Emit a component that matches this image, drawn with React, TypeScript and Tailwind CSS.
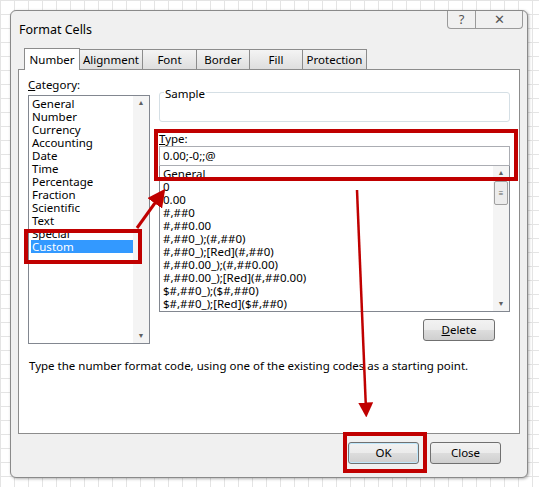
const categories = ["General", "Number", "Currency", "Accounting", "Date", "Time", "Percentage", "Fraction", "Scientific", "Text", "Special", "Custom"];
const formats = ["General", "0", "0.00", "#,##0", "#,##0.00", "#,##0_);(#,##0)", "#,##0_);[Red](#,##0)", "#,##0.00_);(#,##0.00)", "#,##0.00_);[Red](#,##0.00)", "$#,##0_);($#,##0)", "$#,##0_);[Red]($#,##0)"];
const tabs = ["Alignment", "Font", "Border", "Fill", "Protection"];
const tabW = [63, 54, 53, 53, 64];

const font = "font-['Liberation_Sans',Arial,sans-serif] text-[11.5px] text-black";
const btn = "flex items-center justify-center rounded-[3px] border border-[#707070] bg-[linear-gradient(#f2f2f2,#ebebeb_50%,#dddddd_50%,#cfcfcf)]";

function ScrollBar({ thumb }: { thumb?: boolean }) {
  return (
    <div className="flex w-[16px] flex-col items-center justify-between bg-[#f4f4f4] py-[2px] text-[7px] text-[#606060]">
      <span>▲</span>
      {thumb && <div className="mb-auto mt-[2px] flex h-[24px] w-[14px] items-center justify-center rounded-[2px] border border-[#a0a0a0] bg-[#ececec] text-[8px] leading-[4px]">≡</div>}
      <span>▼</span>
    </div>
  );
}

export default function App() {
  return (
    <div className={`relative h-[487px] w-[539px] overflow-hidden bg-white bg-[linear-gradient(#e4e4e4_1px,transparent_1px),linear-gradient(90deg,#e4e4e4_1px,transparent_1px)] bg-[size:14px_14px] ${font}`}>
      <div className="absolute left-[10px] top-[10px] flex h-[468px] w-[518px] flex-col rounded-[6px] border border-[#8a8a8a] bg-[#f0f0f0] shadow-[1px_1px_3px_rgba(0,0,0,0.3)]">
        <div className="flex h-[38px] items-start justify-between pl-[8px]">
          <span className="mt-[10px] text-[12.5px]">Format Cells</span>
          <div className="mr-[4px] flex h-[18px] rounded-b-[4px] border border-t-0 border-[#9a9a9a] text-[13px] text-[#555]">
            <div className="flex w-[28px] items-center justify-center border-r border-[#9a9a9a]">?</div>
            <div className="flex w-[46px] items-center justify-center">✕</div>
          </div>
        </div>
        <div className="mx-[7px] flex h-[385px] flex-col">
          <div className="flex h-[20px] items-end pl-[6px]">
            <div className="z-10 -mb-[1px] flex h-[22px] w-[56px] items-center justify-center border border-b-0 border-[#8c8c8c] bg-white">Number</div>
            {tabs.map((t, i) => (
              <div key={t} style={{ width: tabW[i] }} className="flex h-[20px] items-center justify-center border border-b-0 border-l-0 border-[#8c8c8c] bg-[linear-gradient(#f4f4f4,#dedede)]">{t}</div>
            ))}
          </div>
          <div className="flex flex-1 flex-col border border-[#8c8c8c] bg-white px-[9px] pt-[8px]">
            <div className="flex gap-[9px]">
              <div className="flex flex-col">
                <span className="h-[17px] leading-[14px]"><u>C</u>ategory:</span>
                <div className="flex h-[249px] w-[122px] border border-[#828790]">
                  <div className="flex flex-1 flex-col pl-[2px] pt-[1px]">
                    {categories.map((c) => (
                      <div key={c} className={`h-[13px] pl-[1px] leading-[13px] ${c === "Custom" ? "bg-[#3399ff] text-white" : ""}`}>{c}</div>
                    ))}
                  </div>
                  <ScrollBar />
                </div>
              </div>
              <div className="flex flex-1 flex-col pt-[14px]">
                <div className="relative h-[30px] rounded-[3px] border border-[#d5dfe5]">
                  <span className="absolute -top-[8px] left-[4px] bg-white px-[1px]">Sample</span>
                </div>
                <span className="mt-[10px] leading-[13px]"><u>T</u>ype:</span>
                <div className="mt-[1px] flex h-[20px] items-center border border-[#abadb3] pl-[3px]">0.00;-0;;@</div>
                <div className="flex h-[146px] border border-t-0 border-[#828790]">
                  <div className="flex flex-1 flex-col pl-[3px] pt-[1px]">
                    {formats.map((f) => <div key={f} className="h-[13px] leading-[13px]">{f}</div>)}
                  </div>
                  <ScrollBar thumb />
                </div>
                <div className="mt-[7px] flex justify-end pr-[15px]">
                  <div className={`${btn} h-[22px] w-[72px]`}><u>D</u>elete</div>
                </div>
              </div>
            </div>
            <p className="mt-[13px] pl-[1px]">Type the number format code, using one of the existing codes as a starting point.</p>
          </div>
        </div>
        <div className="mt-[8px] flex justify-end gap-[11px] pr-[26px]">
          <div className={`${btn} h-[22px] w-[71px] border-[#3c7fb1] shadow-[inset_0_0_0_1px_#bfe7fb]`}>OK</div>
          <div className={`${btn} h-[22px] w-[71px]`}>Close</div>
        </div>
      </div>
      <svg className="pointer-events-none absolute left-0 top-0" width="539" height="487">
        <defs>
          <marker id="ah" markerWidth="6" markerHeight="6" refX="3" refY="3" orient="auto">
            <path d="M0,0 L6,3 L0,6 z" fill="#c00000" />
          </marker>
        </defs>
        <g fill="none" stroke="#c00000" strokeWidth="4">
          <rect x="156" y="131" width="360" height="48" />
          <rect x="26" y="231" width="114" height="31" />
          <rect x="345" y="434" width="80" height="37" />
          <line x1="137" y1="228" x2="160" y2="196" strokeWidth="3" markerEnd="url(#ah)" />
          <line x1="357" y1="190" x2="366" y2="410" strokeWidth="2.5" markerEnd="url(#ah)" />
        </g>
      </svg>
    </div>
  );
}
